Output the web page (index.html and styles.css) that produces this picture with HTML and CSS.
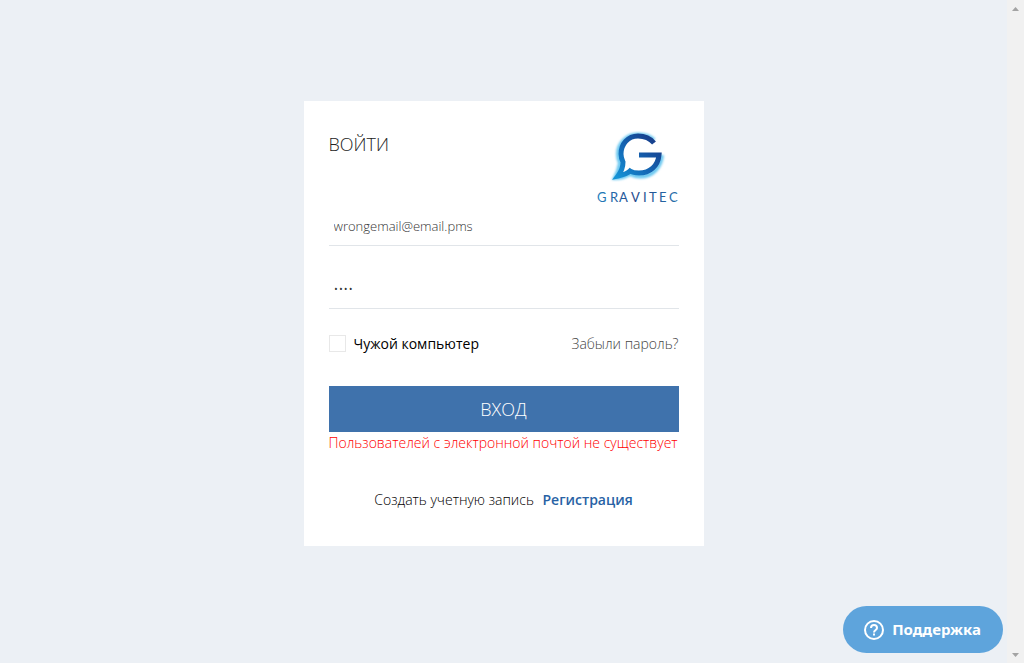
FILE: index.html
```html
<!DOCTYPE html>
<html lang="ru">
<head>
<meta charset="utf-8">
<meta name="viewport" content="width=device-width, initial-scale=1">
<title>Gravitec</title>
<link rel="stylesheet" href="styles.css">
</head>
<body class="page">
<main class="content">
  <form class="card">
    <header class="card-header">
      <h1 class="title">ВОЙТИ</h1>
      <svg class="logo" width="82" height="76" viewBox="0 0 82 76" role="img" aria-label="Gravitec">
        <defs>
          <linearGradient id="mark" gradientUnits="userSpaceOnUse" x1="20" y1="46" x2="56" y2="8">
            <stop offset="0" stop-color="#1593d6"/><stop offset=".5" stop-color="#1466b4"/><stop offset="1" stop-color="#183f8c"/>
          </linearGradient>
          <linearGradient id="word" gradientUnits="userSpaceOnUse" x1="0" y1="0" x2="82" y2="0">
            <stop offset="0" stop-color="#2180bd"/><stop offset=".45" stop-color="#23478b"/><stop offset="1" stop-color="#2671ac"/>
          </linearGradient>
          <filter id="soft" x="-20%" y="-20%" width="140%" height="140%"><feGaussianBlur stdDeviation=".8"/></filter>
        </defs>
        <path d="M57 9C52 4 46 3.500 41 3.500C30 3.500 21 12 21 23C21 26 22 30 23 32C22 38 20 43 18 47C23 47 28 46 33 43C37 45 40 45.500 43 45.500C56 45.500 64 36 65 24" fill="none" stroke="#6cc8f0" stroke-width="4" filter="url(#soft)"/>
        <path d="M57 12C52 6 47 5 41 5C31 5 24 13 24 23C24 26 25 29 26 31C26 36 24 41 21 45C26 44 30 43 33 40C36 42 39 42 42 42C53 42 61 35 62 24H42" fill="none" stroke="url(#mark)" stroke-width="5"/>
        <text class="wordmark" x="0 13 22 34 46 52 62 72" y="71" fill="url(#word)">GRAVITEC</text>
      </svg>
    </header>
    <input class="field" type="email" aria-label="Email" value="wrongemail@email.pms">
    <input class="field field-password" type="password" aria-label="Пароль" value="pass">
    <div class="options">
      <label class="remember"><input class="check" type="checkbox">Чужой компьютер</label>
      <a class="forgot" href="#">Забыли пароль?</a>
    </div>
    <button class="submit" type="submit">ВХОД</button>
    <p class="error" role="alert">Пользователей с электронной почтой не существует</p>
    <p class="signup">Создать учетную запись <a class="register" href="#">Регистрация</a></p>
  </form>
</main>
<div class="scrollbar" aria-hidden="true"><i class="arrow arrow-up"></i><i class="arrow arrow-down"></i></div>
<button class="support" type="button">
  <svg width="22" height="22" viewBox="0 0 22 22" fill="none" stroke="#fff" stroke-width="2" aria-hidden="true"><circle cx="11" cy="11" r="9"/><path d="M8 9C8 5 14 5 14 9C14 11 11 11 11 13.5M11 14.5V16.5"/></svg>
  <span class="support-text">Поддержка</span>
</button>
</body>
</html>
```
FILE: styles.css
```css
* { box-sizing: border-box; }
.page {
  margin: 0;
  min-height: 100vh;
  display: flex;
  background: #ecf0f5;
  color: #222;
  font: 300 14px/20px "Open Sans", sans-serif;
}
.content { flex: 1; display: flex; justify-content: center; align-items: flex-start; padding: 101px 16px 32px; }
.card { width: 100%; max-width: 400px; padding: 30px 25px 36px; background: #fff; }
.card-header { display: flex; justify-content: space-between; align-items: flex-start; }
.title { margin: 0; font-size: 18px; line-height: 26px; font-weight: 300; }
.logo { display: block; }
.wordmark { font: 400 13px Lato, sans-serif; }
.field {
  display: block;
  width: 100%;
  height: 39px;
  padding: 0 5px;
  border: 0;
  border-bottom: 1px solid #e1e5e9;
  outline: 0;
  background: transparent;
  color: #333;
  font: inherit;
  font-size: 13px;
}
.field-password { margin-top: 24px; }
.options { display: flex; justify-content: space-between; margin-top: 25px; }
.remember { display: flex; align-items: flex-start; gap: 8px; color: #000; font-weight: 400; }
.check { appearance: none; width: 17px; height: 17px; margin: 1px 0 0; border: 1px solid #e8e8e8; background: #fff; }
.forgot { color: #444; text-decoration: none; }
.submit { display: block; width: 100%; height: 46px; margin-top: 32px; border: 0; background: #3f72ac; color: #fff; font: inherit; font-size: 18px; }
.error { margin: 1px 0 0; color: #f00; white-space: nowrap; }
.signup { margin: 37px 0 0; text-align: center; color: #000; }
.register { margin-left: 5px; color: #2862a5; font-weight: 600; text-decoration: none; }
.support {
  position: fixed;
  right: 21px;
  bottom: 10px;
  display: flex;
  align-items: center;
  gap: 7px;
  height: 47px;
  padding: 0 22px 0 20px;
  border: 0;
  border-radius: 24px;
  background: #5ea4dc;
  color: #fff;
  font: 700 15px/20px "Noto Sans", sans-serif;
}
.support-text { padding-bottom: 2px; }
.scrollbar { width: 17px; height: 100vh; padding: 7px 4px 6px 5px; display: flex; flex-direction: column; justify-content: space-between; background: #f1f1f1; }
.arrow { width: 7px; height: 4px; background: #a3a3a3; }
.arrow-up { clip-path: polygon(50% 0, 100% 100%, 0 100%); }
.arrow-down { clip-path: polygon(0 0, 100% 0, 50% 100%); }
```
